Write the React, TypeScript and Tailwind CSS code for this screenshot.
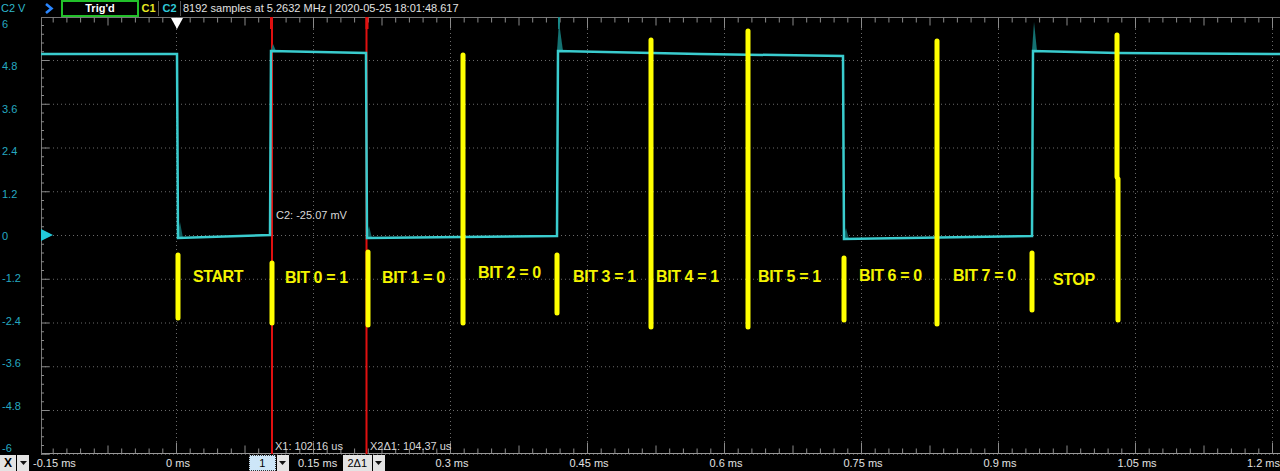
import React from "react";

const X0 = 176.5;
const DX = 137;
const Y0 = 235;
const DY = 43.75;
const TOP = 17;
const BOTTOM = 454;
const LEFT = 41;

const yLabels = ["6", "4.8", "3.6", "2.4", "1.2", "0", "-1.2", "-2.4", "-3.6", "-4.8", "-6"];
const xLabels = ["0 ms", "0.15 ms", "0.3 ms", "0.45 ms", "0.6 ms", "0.75 ms", "0.9 ms", "1.05 ms", "1.2 ms"];

// yellow annotation bars: x, top, bottom
const bars: [number, number, number][] = [
  [178, 255, 318],
  [272, 263, 323],
  [368, 252, 325],
  [463, 55, 323],
  [557, 255, 313],
  [651, 40, 327],
  [748, 31, 327],
  [844, 258, 320],
  [937, 41, 324],
  [1032, 253, 310],
  [1117, 35, 177],
  [1118, 179, 320],
];

const bitLabels: [string, number, number][] = [
  ["START", 193, 282],
  ["BIT 0 = 1", 285, 283],
  ["BIT 1 = 0", 382, 283],
  ["BIT 2 = 0", 478, 278],
  ["BIT 3 = 1", 573, 282],
  ["BIT 4 = 1", 656, 282],
  ["BIT 5 = 1", 758, 282],
  ["BIT 6 = 0", 859, 281],
  ["BIT 7 = 0", 953, 281],
  ["STOP", 1053, 285],
];

const trace =
  "M41,54 L177,54 L178,238 L270,235 L271,51 L366,53 L367,238 L557,236 L558,51 L700,54 L843,56 L844,239 L1032,236 L1033,51 L1118,53 L1280,54";

function Ticks({ y, dir }: { y: number; dir: 1 | -1 }) {
  const out: React.ReactElement[] = [];
  for (let i = -12; i <= 80; i++) {
    const x = X0 + i * 13.7;
    if (x < LEFT + 1 || x > 1280) continue;
    const len = i % 10 === 0 ? 11 : i % 5 === 0 ? 8 : 5;
    out.push(<line key={i} x1={x} x2={x} y1={y} y2={y + dir * len} stroke="#8a8a8a" strokeWidth={1} />);
  }
  return <g>{out}</g>;
}

function Scope() {
  const leftTicks: React.ReactElement[] = [];
  for (let j = -26; j <= 26; j++) {
    const y = Y0 + j * 8.75;
    if (y < TOP || y > BOTTOM) continue;
    const len = j % 5 === 0 ? 8 : 3;
    leftTicks.push(<line key={j} x1={LEFT} x2={LEFT + len} y1={y + 0.5} y2={y + 0.5} stroke="#8a8a8a" strokeWidth={1} />);
  }

  return (
    <svg width={1280} height={438} viewBox="0 17 1280 438" className="block">
      {/* dotted grid */}
      {Array.from({ length: 11 }, (_, k) => Y0 + (k - 5) * DY).map((y, k) => (
        <line key={"h" + k} x1={LEFT} x2={1280} y1={y + 0.5} y2={y + 0.5} stroke="#6a6a6a" strokeDasharray="1 3" />
      ))}
      {Array.from({ length: 9 }, (_, k) => X0 + k * DX).map((x, k) => (
        <line key={"v" + k} x1={x} x2={x} y1={TOP} y2={BOTTOM} stroke="#6a6a6a" strokeDasharray="1 3" />
      ))}

      {/* rulers */}
      <line x1={LEFT} x2={1280} y1={17.5} y2={17.5} stroke="#777" />
      <line x1={LEFT} x2={1280} y1={453.5} y2={453.5} stroke="#999" />
      <line x1={LEFT + 0.5} x2={LEFT + 0.5} y1={TOP} y2={BOTTOM} stroke="#777" />
      <Ticks y={17.5} dir={1} />
      <Ticks y={453.5} dir={-1} />
      {leftTicks}

      {/* y axis labels */}
      {yLabels.map((t, k) => (
        <text key={t} x={2} y={28 + k * 42.4} fill="#25a9c0" fontSize={11} fontFamily="'Liberation Sans', Arial, sans-serif">
          {t}
        </text>
      ))}

      {/* cursors */}
      <line x1={272} x2={272} y1={TOP} y2={BOTTOM} stroke="#e01010" strokeWidth={2} />
      <line x1={366.5} x2={366.5} y1={TOP} y2={BOTTOM} stroke="#e01010" strokeWidth={2} />
      <line x1={271.5} x2={271.5} y1={TOP} y2={29} stroke="#e01010" strokeWidth={3} />
      <line x1={367} x2={367} y1={TOP} y2={29} stroke="#e01010" strokeWidth={3} />
      <line x1={559} x2={559} y1={TOP} y2={29} stroke="#1a8a8a" strokeWidth={2} />

      {/* overshoot spikes */}
      <polygon points="557,51 559,22 563,51" fill="#147272" />
      <polygon points="1032,51 1034,22 1037,51" fill="#147272" />
      <polygon points="271,51 273,44 276,51" fill="#147272" />
      <polygon points="177,238 180,222 183,238" fill="#105e5e" />
      <polygon points="366,238 369,226 372,238" fill="#105e5e" />
      <polygon points="843,239 846,228 849,239" fill="#105e5e" />

      {/* waveform */}
      <path d={trace} fill="none" stroke="#3accce" strokeWidth={2.5} strokeLinejoin="miter" />

      {/* trigger markers */}
      <polygon points="171,18 183,18 177,29" fill="#ffffff" />
      <polygon points="41,229 53,235 41,241" fill="#22c8d8" />

      {/* annotations */}
      {bars.map(([x, a, b], i) => (
        <line key={"b" + i} x1={x} x2={x} y1={a} y2={b} stroke="#ffff00" strokeWidth={5} strokeLinecap="round" />
      ))}
      {bitLabels.map(([t, x, y]) => (
        <text
          key={t}
          x={x}
          y={y}
          fill="#f4f400"
          fontSize={16}
          fontWeight="bold"
          letterSpacing={-0.4}
          fontFamily="'Liberation Sans', Arial, sans-serif"
        >
          {t}
        </text>
      ))}

      {/* readouts */}
      <text x={276} y={219} fill="#d8d8d8" fontSize={11} fontFamily="'Liberation Sans', Arial, sans-serif">
        C2: -25.07 mV
      </text>
      <text x={275} y={450} fill="#d8d8d8" fontSize={11} fontFamily="'Liberation Sans', Arial, sans-serif">
        X1: 102.16 us
      </text>
      <text x={370} y={450} fill="#d8d8d8" fontSize={11} fontFamily="'Liberation Sans', Arial, sans-serif">
        X2Δ1: 104.37 us
      </text>
    </svg>
  );
}

function DropArrow() {
  return (
    <div className="flex h-full w-[12px] items-center justify-center bg-[#e3e3e3]">
      <svg width="7" height="4" viewBox="0 0 7 4">
        <polygon points="0,0 7,0 3.5,4" fill="#111" />
      </svg>
    </div>
  );
}

export default function App() {
  return (
    <div className="h-[471px] w-[1280px] overflow-hidden bg-black font-['Liberation_Sans',Arial,sans-serif] text-[11px]">
      {/* top status bar */}
      <div className="flex h-[17px] items-stretch text-[#e2e2e2]">
        <div className="flex w-[44px] items-center pl-[1px] text-[#2fb8cc]">C2 V</div>
        <div className="flex w-[17px] items-center">
          <svg width="10" height="11" viewBox="0 0 10 11">
            <polyline points="2,1 7.5,5.5 2,10" fill="none" stroke="#2a86ff" strokeWidth="2.6" />
          </svg>
        </div>
        <div className="flex w-[78px] items-center justify-center border-2 border-[#22c02a] font-bold text-white">
          Trig'd
        </div>
        <div className="flex w-[19px] items-center justify-center font-bold text-[#e8e820]">C1</div>
        <div className="my-[1px] w-px bg-[#555]" />
        <div className="flex w-[21px] items-center justify-center font-bold text-[#30c8d8]">C2</div>
        <div className="my-[1px] w-px bg-[#555]" />
        <div className="flex items-center pl-[2px]">8192 samples at 5.2632 MHz | 2020-05-25 18:01:48.617</div>
      </div>

      <Scope />

      {/* bottom axis bar */}
      <div className="relative flex h-4 items-stretch text-[#e2e2e2]">
        <div className="flex w-[16px] items-center justify-center bg-[#e3e3e3] text-[12px] font-bold text-black">X</div>
        <div className="ml-px">
          <DropArrow />
        </div>
        <div className="ml-[4px] flex items-center">-0.15 ms</div>
        <div className="ml-[173px] flex w-[27px] items-center justify-center border border-dotted border-[#333] bg-[#cde6f8] text-black">
          1
        </div>
        <div className="ml-px">
          <DropArrow />
        </div>
        <div className="ml-[54px] flex w-[29px] items-center justify-center bg-[#e3e3e3] text-black">2Δ1</div>
        <div className="ml-px">
          <DropArrow />
        </div>
        {xLabels.map((t, k) =>
          k === 1 ? (
            <div key={t} className="absolute top-0 flex h-full items-center" style={{ left: 298 }}>
              {t}
            </div>
          ) : k === 8 ? (
            <div key={t} className="absolute top-0 right-0 flex h-full items-center whitespace-nowrap">
              {t}
            </div>
          ) : (
            <div
              key={t}
              className="absolute top-0 flex h-full -translate-x-1/2 items-center whitespace-nowrap"
              style={{ left: X0 + k * DX + 1.5 }}
            >
              {t}
            </div>
          )
        )}
      </div>
    </div>
  );
}
